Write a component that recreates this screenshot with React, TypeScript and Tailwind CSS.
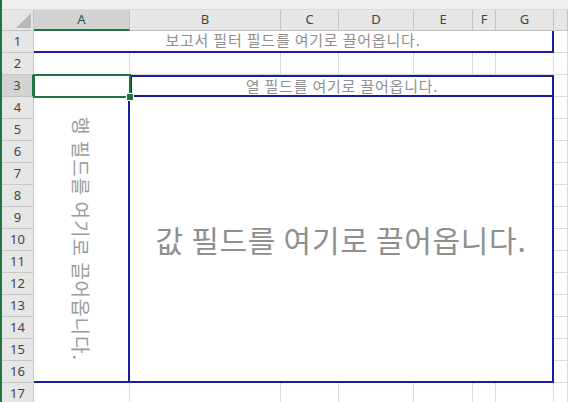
import React from "react";

const COLS = ["A", "B", "C", "D", "E", "F", "G", ""];
const GRID =
  "grid grid-cols-[32px_96px_151px_58px_75px_59px_23px_58px_1fr] grid-rows-[21px_repeat(17,22px)]";

export default function App() {
  const rows = Array.from({ length: 17 }, (_, i) => i + 1);
  return (
    <div className="w-[568px] h-[402px] overflow-hidden bg-white border-l-2 border-[#217346] font-['Noto_Sans','Noto_Sans_CJK_KR',sans-serif]">
      <div className="h-[10px] bg-[#efefef] border-b border-[#dcdcdc]" />
      <div className="relative">
        <div className={GRID}>
          {/* corner */}
          <div className="bg-[#e6e6e6] border-r border-b border-[#c2c2c2] flex items-end justify-end p-[2px]">
            <svg width="15" height="15" viewBox="0 0 15 15">
              <polygon points="0,15 15,0 15,15" fill="#b8b8b8" />
            </svg>
          </div>
          {COLS.map((c, i) => (
            <div
              key={"h" + i}
              className={
                i === 0
                  ? "bg-[#d3d3d3] border-r border-[#c2c2c2] border-b-2 border-b-[#217346] flex items-center justify-center text-[13px] text-[#2b5a3a]"
                  : "bg-[#e6e6e6] border-r border-b border-[#c2c2c2] flex items-center justify-center text-[13px] text-[#444]"
              }
            >
              {c}
            </div>
          ))}
          {rows.map((r) => (
            <React.Fragment key={r}>
              <div
                className={
                  r === 3
                    ? "bg-[#d3d3d3] border-r-2 border-r-[#217346] border-b border-[#c2c2c2] flex items-center justify-center text-[13px] text-[#2b5a3a]"
                    : "bg-[#e6e6e6] border-r border-b border-[#c8c8c8] flex items-center justify-center text-[13px] text-[#444]"
                }
              >
                {r}
              </div>
              {COLS.map((_, i) => (
                <div key={i} className="bg-white border-r border-b border-[#dadada]" />
              ))}
            </React.Fragment>
          ))}
        </div>

        {/* pivot table placeholder overlay */}
        <div className={"absolute inset-0 " + GRID}>
          {/* report filter area */}
          <div className="col-start-2 col-end-9 row-start-2 row-end-3 bg-white border-r-2 border-b-2 border-[#1a1aa3] flex items-start justify-center pt-[1px] font-['Noto_Sans_CJK_KR',sans-serif] text-[15px] tracking-[0.8px] text-[#8f8f8f] leading-[15px] whitespace-nowrap">
            보고서 필터 필드를 여기로 끌어옵니다.
          </div>

          {/* column area */}
          <div className="col-start-3 col-end-9 row-start-4 row-end-5 bg-white border-2 border-[#1a1aa3] flex items-start justify-center pt-[1px] font-['Noto_Sans_CJK_KR',sans-serif] text-[15px] tracking-[0.8px] text-[#8f8f8f] leading-[15px] whitespace-nowrap">
            열 필드를 여기로 끌어옵니다.
          </div>

          {/* row area */}
          <div className="col-start-2 col-end-3 row-start-5 row-end-18 bg-white border-r-2 border-b-2 border-[#1a1aa3] flex items-center justify-center">
            <span className="[writing-mode:vertical-rl] [text-orientation:sideways] font-['Noto_Sans_CJK_KR',sans-serif] text-[19px] tracking-[1px] text-[#9a9a9a] leading-none whitespace-nowrap">
              행 필드를 여기로 끌어옵니다.
            </span>
          </div>

          {/* values area */}
          <div className="col-start-3 col-end-9 row-start-5 row-end-18 bg-white border-r-2 border-b-2 border-[#1a1aa3] flex items-center justify-center font-['Noto_Sans_CJK_KR',sans-serif] text-[30px] tracking-[0.7px] text-[#8f8f8f] leading-none whitespace-nowrap">
            값 필드를 여기로 끌어옵니다.
          </div>

          {/* selection */}
          <div className="col-start-2 col-end-3 row-start-4 row-end-5 -m-px relative border-2 border-[#217346]">
            <div className="absolute -right-[5px] -bottom-[5px] w-[8px] h-[8px] bg-[#217346] border border-white" />
          </div>
        </div>
      </div>
    </div>
  );
}
